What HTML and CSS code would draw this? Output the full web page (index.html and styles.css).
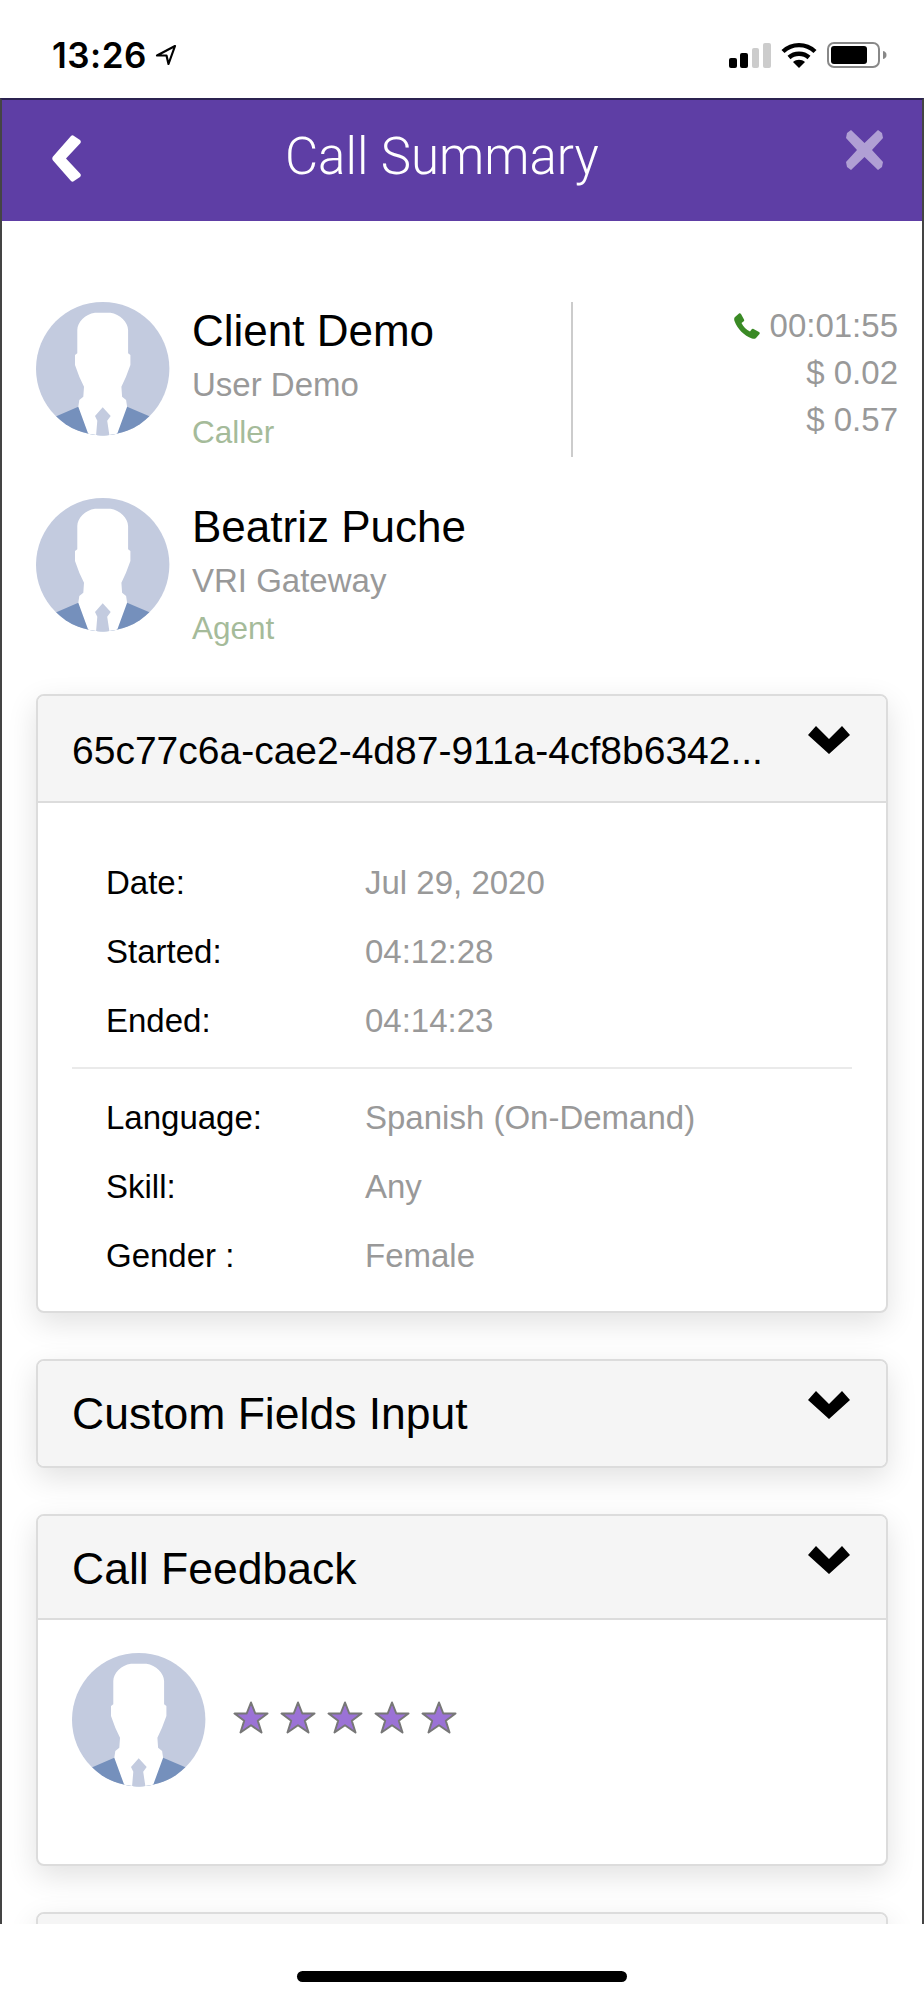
FILE: index.html
```html
<!DOCTYPE html>
<html lang="en">
<head>
  <meta charset="UTF-8">
  <meta name="viewport" content="width=device-width, initial-scale=1.0">
  <title>Call Summary</title>
  <link rel="stylesheet" href="styles.css">
</head>
<body>
  <svg class="defs" width="0" height="0" aria-hidden="true">
    <defs>
      <clipPath id="avatarClip"><circle cx="66.7" cy="66.7" r="66.7"/></clipPath>
      <symbol id="avatar" viewBox="0 0 134 134">
        <circle cx="66.7" cy="66.7" r="66.7" fill="#c3cbdf"/>
        <g clip-path="url(#avatarClip)">
          <path fill="#7590bc" d="M0 123L42.300 104.700H91.100L134 123V134H0Z"/>
          <path fill="#fff" d="M59 10.700H74.400C84 12 92 20 92.100 28V51.300L94.400 53V63L90 74.700L85.400 84.700L86.100 94.700L90.100 98L91.100 104.700L80.400 134H53L42.300 104.700L43.300 98L47.300 94.700L48 84.700L43.300 74.700L39 63V53L41.300 51.300V28C41.400 20 49 12 59 10.700Z"/>
          <path fill="#c3cbdf" d="M66.700 105.300L74.700 114L71.200 118.700L73.500 134H60L61.300 118.700L59 114Z"/>
        </g>
      </symbol>
      <symbol id="chevron" viewBox="0 0 42 28">
        <path d="M0 9L8 0L21 13L34 0L42 9L21 28Z"/>
      </symbol>
      <symbol id="star" viewBox="0 0 36 33">
        <path fill="#9b72d6" stroke="#777" stroke-width="2" stroke-linejoin="round" d="M18 1.500L22.300 12.500H34.500L24.800 19.800L28.500 31.500L18 24.300L7.500 31.500L11.200 19.800L1.500 12.500H13.700Z"/>
      </symbol>
    </defs>
  </svg>

  <div class="status-bar">
    <div class="status-time">
      <span>13:26</span>
      <svg class="location" width="22" height="22" viewBox="0 0 22 22"><path fill="none" stroke="#000" stroke-width="2.2" stroke-linejoin="round" d="M20 2L2 11.500H11.500L13.500 20Z"/></svg>
    </div>
    <div class="status-icons">
      <svg width="42" height="25" viewBox="0 0 42 25">
        <rect x="0" y="15" width="8" height="10" rx="2"/>
        <rect x="11" y="10" width="8" height="15" rx="2"/>
        <rect x="23" y="5" width="7" height="20" rx="2" fill="#ccc"/>
        <rect x="34" y="0" width="8" height="25" rx="2" fill="#ccc"/>
      </svg>
      <svg width="36" height="26" viewBox="0 0 36 26">
        <path fill="none" stroke="#000" stroke-width="4.400" d="M2 9.500C11 1 25 1 34 9.500"/>
        <path fill="none" stroke="#000" stroke-width="4.400" d="M8 15.500C13.500 10.500 22.500 10.500 28 15.500"/>
        <path d="M12 20C15.500 17 20.500 17 24 20L18 26Z"/>
      </svg>
      <svg class="battery" width="60" height="26" viewBox="0 0 60 26">
        <rect x="1" y="1" width="51" height="24" rx="6" fill="#fff" stroke="#888" stroke-width="2"/>
        <rect x="4" y="4" width="36" height="18" rx="3"/>
        <path fill="#888" d="M56 9C58.500 9.500 59.500 11 59.500 13S58.500 16.500 56 17Z"/>
      </svg>
    </div>
  </div>

  <div class="frame">
    <header class="app-header">
      <svg class="back" width="29" height="47" viewBox="0 0 29 47"><path fill="#fff" d="M22 1L28 5C29 6 29 7 28.500 8L14 23.500L28.500 39C29 40 29 41 28 42L22 46C21 47 20 47 19 46L1 25.500C0 24.500 0 22.500 1 21.500L19 1C20 0 21 0 22 1Z"/></svg>
      <h1>Call Summary</h1>
      <svg class="close" width="37" height="40" viewBox="0 0 37 40"><path fill="#b09fd4" d="M1 3L5 0L18.500 13L32 0L36 3L37 8L26 20L37 32L36 37L32 40L18.500 27L5 40L1 37L0 32L11 20L0 8Z"/></svg>
    </header>

    <main class="content">
      <section class="top-row">
        <div class="person">
          <svg class="avatar"><use href="#avatar"/></svg>
          <div class="person-info">
            <div class="person-name">Client Demo</div>
            <div class="person-sub">User Demo</div>
            <div class="person-role">Caller</div>
          </div>
        </div>
        <div class="call-stats">
          <div class="stat">
            <svg class="phone" width="26" height="26" viewBox="0 0 26 26"><path fill="#3a8a25" d="M1 4L5 0.500C6 0 6.500 0.500 7 1L10 6.500C10.500 7.500 10.200 8 9.500 8.500L7.500 10C9 13.500 12.500 17 16 18.500L17.500 16.500C18 15.800 18.800 15.500 19.500 16L25 19C25.800 19.500 26 20 25.500 21L22 25C21 26 19.500 26 18 25.500C10 22.500 3.500 16 0.500 8C0 6.500 0 5 1 4Z"/></svg>
            <span>00:01:55</span>
          </div>
          <div class="stat">$ 0.02</div>
          <div class="stat">$ 0.57</div>
        </div>
      </section>

      <section class="person person-second">
        <svg class="avatar"><use href="#avatar"/></svg>
        <div class="person-info">
          <div class="person-name">Beatriz Puche</div>
          <div class="person-sub">VRI Gateway</div>
          <div class="person-role">Agent</div>
        </div>
      </section>

      <div class="card">
        <div class="card-header card-header-id">
          <span class="card-title card-title-id">65c77c6a-cae2-4d87-911a-4cf8b6342...</span>
          <svg class="chevron"><use href="#chevron"/></svg>
        </div>
        <div class="card-body details">
          <div class="detail-group">
            <div class="detail-row"><span class="detail-label">Date:</span><span class="detail-value">Jul 29, 2020</span></div>
            <div class="detail-row"><span class="detail-label">Started:</span><span class="detail-value">04:12:28</span></div>
            <div class="detail-row"><span class="detail-label">Ended:</span><span class="detail-value">04:14:23</span></div>
          </div>
          <hr class="divider">
          <div class="detail-group">
            <div class="detail-row"><span class="detail-label">Language:</span><span class="detail-value">Spanish (On-Demand)</span></div>
            <div class="detail-row"><span class="detail-label">Skill:</span><span class="detail-value">Any</span></div>
            <div class="detail-row"><span class="detail-label">Gender :</span><span class="detail-value">Female</span></div>
          </div>
        </div>
      </div>

      <div class="card">
        <div class="card-header card-header-last">
          <span class="card-title">Custom Fields Input</span>
          <svg class="chevron"><use href="#chevron"/></svg>
        </div>
      </div>

      <div class="card">
        <div class="card-header card-header-feedback">
          <span class="card-title">Call Feedback</span>
          <svg class="chevron"><use href="#chevron"/></svg>
        </div>
        <div class="card-body feedback">
          <svg class="avatar"><use href="#avatar"/></svg>
          <div class="stars">
            <svg class="star"><use href="#star"/></svg>
            <svg class="star"><use href="#star"/></svg>
            <svg class="star"><use href="#star"/></svg>
            <svg class="star"><use href="#star"/></svg>
            <svg class="star"><use href="#star"/></svg>
          </div>
        </div>
      </div>

      <div class="card">
        <div class="card-header"></div>
      </div>
    </main>
  </div>

  <div class="home-area">
    <div class="home-indicator"></div>
  </div>
</body>
</html>
```

FILE: styles.css
```css
:root {
  --purple: #5e3ea5;
  --text-grey: #999999;
  --role-green: #a5bb9a;
  --card-border: #dcdcdc;
}

body {
  margin: 0;
  height: 2000px;
  overflow: hidden;
  background-color: #ffffff;
  color: #000000;
  font-family: "Liberation Sans", Arial, sans-serif;
}

.defs {
  position: absolute;
}

.status-bar {
  height: 98px;
  display: flex;
  justify-content: space-between;
  align-items: flex-end;
  padding: 0 37px 30px 52px;
  box-sizing: border-box;
}

.status-time {
  display: flex;
  align-items: center;
  gap: 8px;
  font-family: Inter, sans-serif;
  font-size: 35px;
  font-weight: 600;
  line-height: 26px;
  letter-spacing: 0.5px;
}

.status-icons {
  display: flex;
  align-items: flex-end;
  gap: 10px;
}

.frame {
  height: 1826px;
  box-sizing: border-box;
  border-left: 2px solid #444444;
  border-right: 2px solid #444444;
  border-top: 2px solid #2b2250;
  overflow: hidden;
}

.app-header {
  height: 121px;
  background-color: var(--purple);
  display: flex;
  align-items: flex-start;
  padding: 30px 39px 0 50px;
  box-sizing: border-box;
}

.app-header h1 {
  flex: 1;
  margin: -3px 0 0 204px;
  color: #ffffff;
  font-family: Roboto, sans-serif;
  font-size: 51px;
  font-weight: 300;
  line-height: 60px;
}

.back {
  margin-top: 5px;
}

.content {
  padding: 81px 34px 0 34px;
}

.top-row {
  display: flex;
  justify-content: space-between;
  margin-right: -10px;
}

.person {
  display: flex;
  gap: 22px;
}

.person-second {
  margin-top: 41px;
}

.avatar {
  width: 134px;
  height: 134px;
  flex-shrink: 0;
}

.person-name {
  font-size: 44px;
  line-height: 58px;
}

.person-sub {
  font-size: 33px;
  line-height: 49px;
  color: var(--text-grey);
}

.person-role {
  font-size: 31.500px;
  line-height: 47px;
  color: var(--role-green);
}

.call-stats {
  width: 327px;
  height: 155px;
  box-sizing: border-box;
  border-left: 2px solid #cccccc;
  color: var(--text-grey);
  font-size: 33px;
  line-height: 47px;
  text-align: right;
}

.stat {
  display: flex;
  justify-content: flex-end;
  align-items: center;
  gap: 10px;
}

.card {
  margin-top: 46px;
  border: 2px solid var(--card-border);
  border-radius: 8px;
  background-color: #ffffff;
  box-shadow: 0 10px 30px rgba(0, 0, 0, 0.12);
  overflow: hidden;
}

.person-second + .card {
  margin-top: 42px;
}

.card-header {
  height: 105px;
  box-sizing: border-box;
  padding: 15px 36px 0 34px;
  display: flex;
  justify-content: space-between;
  align-items: flex-start;
  background-color: #f5f5f5;
  border-bottom: 2px solid var(--card-border);
}

.card-header-id {
  height: 107px;
}

.card-header-last {
  border-bottom: none;
}

.card-header-feedback {
  height: 104px;
}

.card-title {
  font-size: 44.500px;
  line-height: 76px;
  white-space: nowrap;
}

.card-title-id {
  font-size: 39px;
  line-height: 80px;
}

.chevron {
  width: 42px;
  height: 28px;
  margin-top: 15px;
}

.details {
  padding: 45px 34px 21px 34px;
}

.detail-row {
  display: flex;
  height: 69px;
  align-items: center;
  padding-left: 34px;
  font-size: 33px;
}

.detail-label {
  width: 259px;
}

.detail-value {
  color: var(--text-grey);
}

.divider {
  margin: 12px 0 14px;
  border: none;
  border-top: 2px solid #eaeaea;
}

.feedback {
  display: flex;
  align-items: center;
  gap: 27px;
  padding: 33px 34px 77px 34px;
}

.stars {
  display: flex;
  gap: 11px;
  margin-bottom: 6px;
}

.star {
  width: 36px;
  height: 33px;
}

.home-area {
  height: 76px;
  display: flex;
  justify-content: center;
  padding-top: 47px;
  box-sizing: border-box;
  background-color: #ffffff;
}

.home-indicator {
  width: 330px;
  height: 11px;
  border-radius: 6px;
  background-color: #000000;
}
```
